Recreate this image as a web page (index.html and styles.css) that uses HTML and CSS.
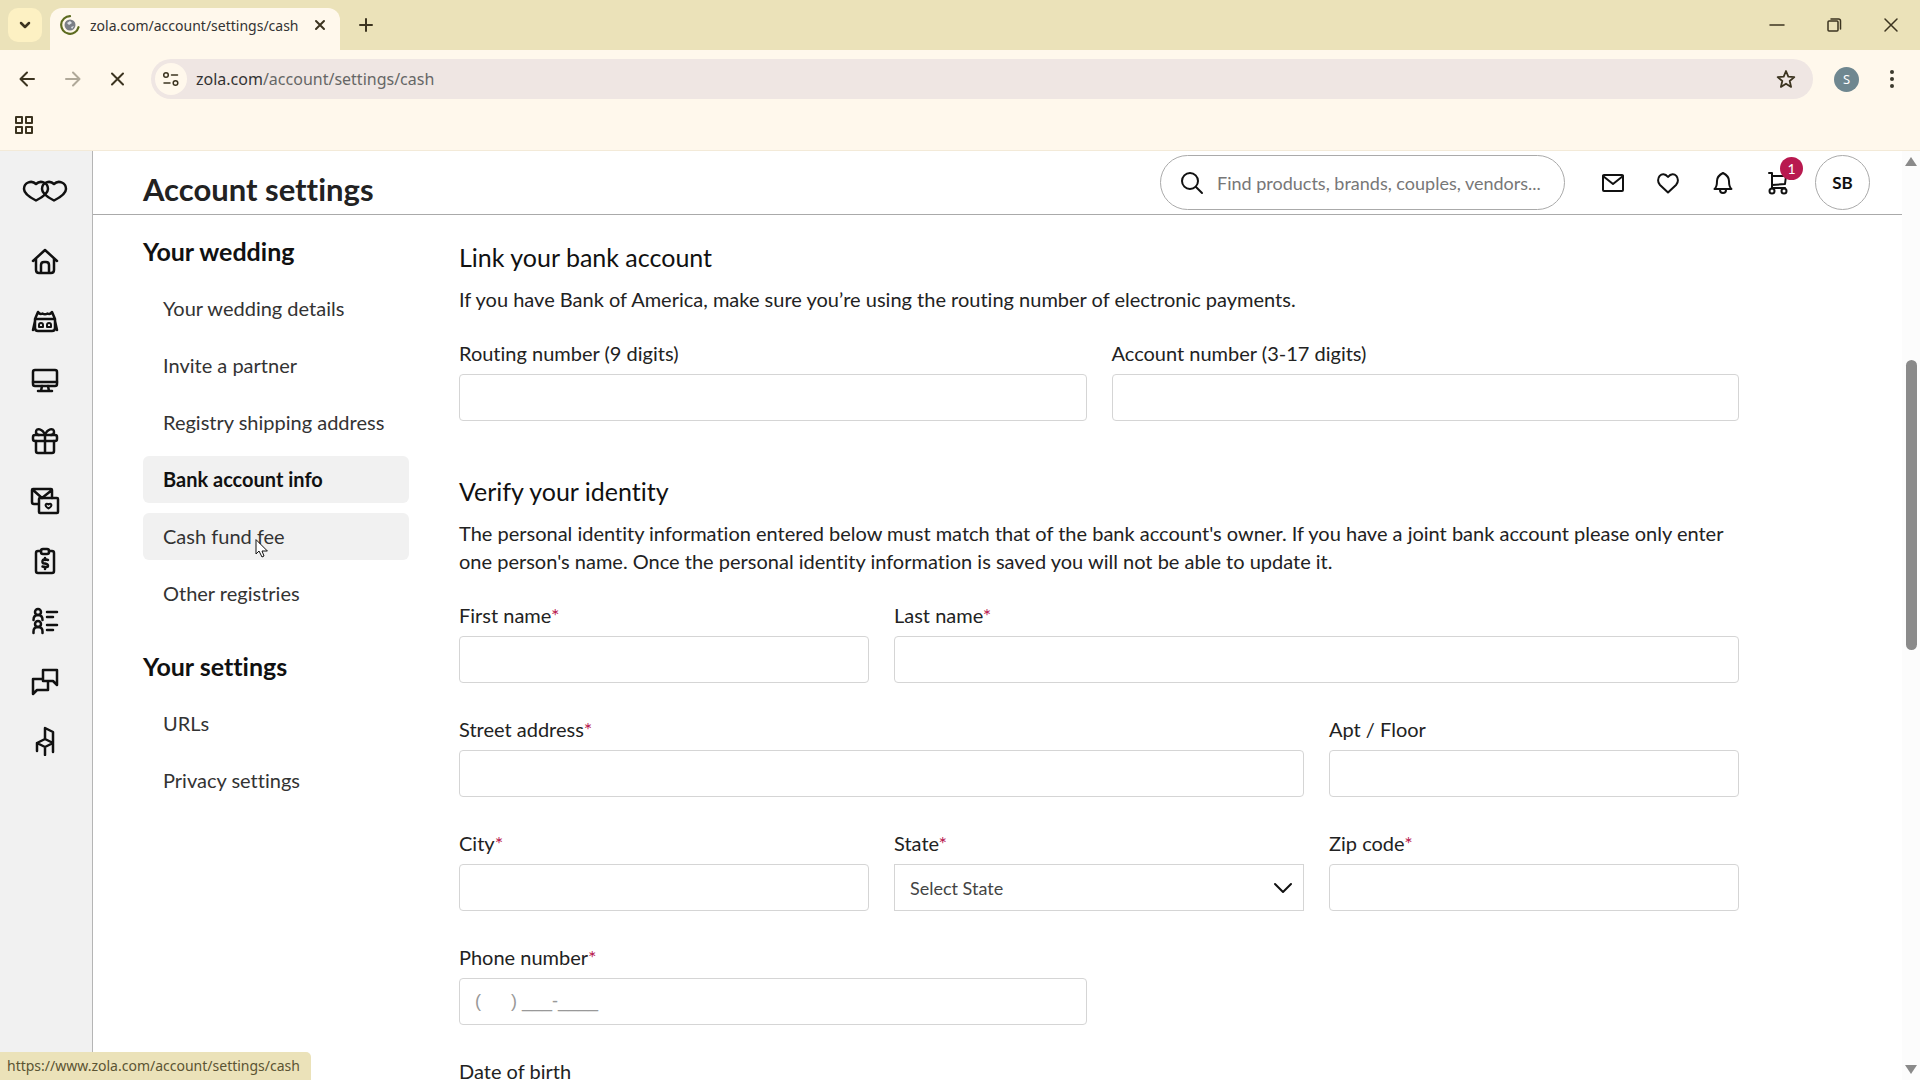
FILE: index.html
```
<!DOCTYPE html>
<html lang="en">
<head>
    <meta charset="utf-8">
    <title>Account settings</title>
    <link rel="stylesheet" href="styles.css">
</head>
<body>
    <div class="tab-strip">
        <button class="tab-search" aria-label="Search tabs">
            <svg width="24" height="24" viewBox="0 0 24 24"><path d="M8 10l4 4 4-4" stroke-width="2.5"/></svg>
        </button>
        <div class="tab">
            <svg class="favicon" width="20" height="20" viewBox="0 0 20 20">
                <circle cx="10" cy="10" r="5.5" fill="#7b7f86" stroke="none"/>
                <path d="M7 8l3-2 2 2-3 2zM11 12l3-1-2 3z" fill="#dfe3e8" stroke="none"/>
                <path d="M10 1.200a8.800 8.800 0 1 0 8.500 11" stroke="#5d6b1f" stroke-width="2.200"/>
            </svg>
            <span class="tab-title">zola.com/account/settings/cash</span>
            <button class="plain" aria-label="Close tab">
                <svg width="20" height="20" viewBox="0 0 20 20"><path d="M6 6l8 8M14 6l-8 8" stroke-width="2"/></svg>
            </button>
        </div>
        <button class="plain new-tab" aria-label="New tab">
            <svg width="24" height="24" viewBox="0 0 24 24"><path d="M12 6v12M6 12h12" stroke-width="2"/></svg>
        </button>
        <div class="window-buttons">
            <button class="plain" aria-label="Minimize"><svg width="20" height="20" viewBox="0 0 20 20"><path d="M3 10h14"/></svg></button>
            <button class="plain" aria-label="Restore"><svg width="20" height="20" viewBox="0 0 20 20"><rect x="4" y="6" width="10" height="10" rx="1"/><path d="M7 4h7.500a2 2 0 0 1 2 2v8"/></svg></button>
            <button class="plain" aria-label="Close"><svg width="20" height="20" viewBox="0 0 20 20"><path d="M4 4l12 12M16 4L4 16"/></svg></button>
        </div>
    </div>

    <div class="toolbar">
        <button class="plain" aria-label="Back"><svg width="24" height="24" viewBox="0 0 24 24"><path d="M18 12H5M11 5.500L4.500 12l6.500 6.500" stroke-width="2"/></svg></button>
        <button class="plain" aria-label="Forward"><svg class="faded" width="24" height="24" viewBox="0 0 24 24"><path d="M5 12h13M12 5.500l6.500 6.500-6.500 6.500" stroke-width="2"/></svg></button>
        <button class="plain" aria-label="Stop"><svg width="24" height="24" viewBox="0 0 24 24"><path d="M6 6.500l11 11M17 6.500l-11 11" stroke-width="2"/></svg></button>
        <div class="address">
            <span class="site-info"><svg width="20" height="20" viewBox="0 0 20 20"><circle cx="5" cy="6" r="2.300"/><path d="M10.500 6h6M3 14h6" /><circle cx="14.500" cy="14" r="2.300"/></svg></span>
            <span class="url">zola.com<span class="url-path">/account/settings/cash</span></span>
            <button class="plain" aria-label="Bookmark"><svg width="24" height="24" viewBox="0 0 24 24"><path d="M12 4l2.300 5.600 6 .5-4.600 3.900 1.400 5.900L12 16.700l-5.100 3.200 1.400-5.900-4.600-3.900 6-.5z" stroke-width="1.800"/></svg></button>
        </div>
        <span class="profile">S</span>
        <button class="plain" aria-label="Menu"><svg width="24" height="24" viewBox="0 0 24 24"><g fill="#3c3a2e" stroke="none"><circle cx="12" cy="5" r="2"/><circle cx="12" cy="12" r="2"/><circle cx="12" cy="19" r="2"/></g></svg></button>
    </div>

    <div class="bookmarks">
        <button class="plain" aria-label="Tab groups"><svg width="20" height="20" viewBox="0 0 20 20"><path d="M2 2h6v6H2zM12 2h6v6h-6zM2 12h6v6H2zM12 12h6v6h-6z" stroke-width="2"/></svg></button>
    </div>

    <div class="page">
        <nav class="rail" aria-label="Main">
            <a class="logo" href="#" aria-label="Zola">
                <svg width="46" height="24" viewBox="0 0 46 24"><path d="M14 21.500C9 19 2 15 2 10c0-7 8-9 12-5C18 1 26 3 26 10c0 5-7 9-12 11.500z"/><path d="M32 21.500C27 19 20 15 20 10c0-7 8-9 12-5C36 1 44 3 44 10c0 5-7 9-12 11.500z"/></svg>
            </a>
            <a href="#" aria-label="Home"><svg width="30" height="30" viewBox="0 0 30 30"><path d="M3 15L15 4l12 11M6 13v11q0 3 3 3h12q3 0 3-3V13M11 27v-8q0-3 3-3h2q3 0 3 3v8"/></svg></a>
            <a href="#" aria-label="Venues"><svg width="30" height="30" viewBox="0 0 30 30"><path d="M8 6q2 3 4.500 1.500Q15 9 17.500 7.500 20 9 22 6l3 7v9q0 3-3 3H8q-3 0-3-3v-9zM5 13h20M5 15l-2 9M25 15l2 9"/><path d="M9 21v-2q0-2 2-2t2 2v2zM17 21v-2q0-2 2-2t2 2v2z" stroke-width="2"/></svg></a>
            <a href="#" aria-label="Website"><svg width="30" height="30" viewBox="0 0 30 30"><rect x="3" y="4" width="24" height="16" rx="2"/><path d="M3 16h24M12 20l-1 5M18 20l1 5M8 25h14"/></svg></a>
            <a href="#" aria-label="Registry"><svg width="30" height="30" viewBox="0 0 30 30"><rect x="3" y="9" width="24" height="6" rx="2"/><path d="M6 15v10q0 2 2 2h14q2 0 2-2V15M15 9v18M15 9C13 3 6 1 6 6q0 3 3 3M15 9c2-6 9-8 9-3q0 3-3 3"/></svg></a>
            <a href="#" aria-label="Invitations"><svg width="30" height="30" viewBox="0 0 30 30"><path d="M8 18H4q-2 0-2-2V4q0-1 1-1h18q1 0 1 1v8M3 4l9 8 10-8"/><rect x="9" y="12" width="19" height="15" rx="1"/><path d="M18.500 22.500c-5-3-2.500-6 0-4 2.500-2 5 1 0 4z" stroke-width="2"/></svg></a>
            <a href="#" aria-label="Budget"><svg width="30" height="30" viewBox="0 0 30 30"><path d="M11 5H8Q6 5 6 7v18q0 2 2 2h14q2 0 2-2V7q0-2-2-2h-3"/><rect x="11" y="3" width="8" height="5" rx="2"/><path d="M18 14q-5-2-5.500 1t2.500 2.500Q18 18 18 20t-5.500.5M15 12v2M15 21v2"/></svg></a>
            <a href="#" aria-label="Guest list"><svg width="30" height="30" viewBox="0 0 30 30"><circle cx="8" cy="6" r="3"/><path d="M3.500 14q0-5 4.500-5t4.500 5"/><circle cx="8" cy="18" r="3"/><path d="M3.500 27v-1.500q0-4.500 4.500-4.500t4.500 4.500V27M17 6h10M17 11h6M17 19h10M17 24h6"/></svg></a>
            <a href="#" aria-label="Messages"><svg width="30" height="30" viewBox="0 0 30 30"><path d="M13 14V4h14v15l-4-4H13zM13 13H3v15l4-4h11v-8"/></svg></a>
            <a href="#" aria-label="Seating"><svg width="30" height="30" viewBox="0 0 30 30"><path d="M15 13V2l8 4v12M15 13l8 4-8 4-8-4zM7 17v8M15 21v8M23 17v9"/></svg></a>
        </nav>

        <div class="content">
            <header class="site-header">
                <h1>Account settings</h1>
                <label class="search">
                    <svg width="26" height="26" viewBox="0 0 26 26"><circle cx="11" cy="11" r="8"/><path d="M17 17l6 6"/></svg>
                    <input type="text" placeholder="Find products, brands, couples, vendors..." aria-label="Search">
                </label>
                <div class="header-icons">
                    <a href="#" aria-label="Inbox"><svg width="26" height="26" viewBox="0 0 26 26"><rect x="3" y="5" width="20" height="16" rx="1"/><path d="M3 6l10 8 10-8"/></svg></a>
                    <a href="#" aria-label="Favorites"><svg width="26" height="26" viewBox="0 0 26 26"><path d="M13 22.500L5 15C-.5 9 7-.5 13 7c6-7.500 13.500 2 8 8z"/></svg></a>
                    <a href="#" aria-label="Notifications"><svg width="26" height="26" viewBox="0 0 26 26"><path d="M4.500 19Q7 17 7 11q0-5 6-8 6 3 6 8 0 6 2.500 8zM10 20q0 3 3 3t3-3"/></svg></a>
                    <a class="cart" href="#" aria-label="Cart"><svg width="26" height="26" viewBox="0 0 26 26"><path d="M4 3h3v15h13M7 6h14l-1 8-13 1"/><circle cx="7" cy="21" r="2.500"/><circle cx="19" cy="21" r="2.500"/></svg><span class="badge">1</span></a>
                </div>
                <button class="avatar">SB</button>
            </header>

            <main class="main">
                <nav class="settings-nav" aria-label="Settings">
                    <h2>Your wedding</h2>
                    <ul>
                        <li><a href="#">Your wedding details</a></li>
                        <li><a href="#">Invite a partner</a></li>
                        <li><a href="#">Registry shipping address</a></li>
                        <li><a class="active" href="#">Bank account info</a></li>
                        <li><a class="hovered" href="#">Cash fund fee</a></li>
                        <li><a href="#">Other registries</a></li>
                    </ul>
                    <h2>Your settings</h2>
                    <ul>
                        <li><a href="#">URLs</a></li>
                        <li><a href="#">Privacy settings</a></li>
                    </ul>
                </nav>

                <form class="bank-form">
                    <h3>Link your bank account</h3>
                    <p>If you have Bank of America, make sure you’re using the routing number of electronic payments.</p>
                    <div class="row">
                        <div class="field half"><label for="routing">Routing number (9 digits)</label><input id="routing" type="text"></div>
                        <div class="field half"><label for="account">Account number (3-17 digits)</label><input id="account" type="text"></div>
                    </div>

                    <h3 class="verify">Verify your identity</h3>
                    <p>The personal identity information entered below must match that of the bank account's owner. If you have a joint bank account please only enter one person's name. Once the personal identity information is saved you will not be able to update it.</p>
                    <div class="row">
                        <div class="field third"><label for="first">First name<span class="req">*</span></label><input id="first" type="text"></div>
                        <div class="field two-thirds"><label for="last">Last name<span class="req">*</span></label><input id="last" type="text"></div>
                        <div class="field two-thirds"><label for="street">Street address<span class="req">*</span></label><input id="street" type="text"></div>
                        <div class="field third"><label for="apt">Apt / Floor</label><input id="apt" type="text"></div>
                        <div class="field third"><label for="city">City<span class="req">*</span></label><input id="city" type="text"></div>
                        <div class="field third">
                            <label for="state">State<span class="req">*</span></label>
                            <div class="select-box">
                                <select id="state"><option>Select State</option></select>
                                <svg width="20" height="20" viewBox="0 0 20 20"><path d="M2 6l8 8 8-8"/></svg>
                            </div>
                        </div>
                        <div class="field third"><label for="zip">Zip code<span class="req">*</span></label><input id="zip" type="text"></div>
                        <div class="field half"><label for="phone">Phone number<span class="req">*</span></label><input id="phone" class="phone" type="tel" placeholder="(&nbsp;&nbsp;&nbsp;&nbsp;&nbsp;&nbsp;) ___-____"></div>
                        <div class="field half"></div>
                        <div class="field half"><label for="dob">Date of birth</label><input id="dob" type="text"></div>
                    </div>
                </form>
            </main>
        </div>

        <div class="scrollbar">
            <span class="arrow-up"></span>
            <span class="thumb"></span>
            <span class="arrow-down"></span>
        </div>
    </div>

    <div class="status">https://www.zola.com/account/settings/cash</div>
    <svg class="cursor" width="14" height="20" viewBox="0 0 14 20"><path d="M1 1v14l3-3 3 6 2-1-2-5h5z" fill="#fff" stroke-width="1"/></svg>
</body>
</html>
```
FILE: styles.css
```
* {
    box-sizing: border-box;
}
body {
    margin: 0;
    height: 100vh;
    overflow: hidden;
    display: flex;
    flex-direction: column;
    font-family: Lato, "Liberation Sans", sans-serif;
    font-variant-ligatures: none;
    color: #222;
    background-color: #fff;
}
svg {
    display: block;
    fill: none;
    stroke: #111;
    stroke-width: 2;
    stroke-linecap: round;
    stroke-linejoin: round;
}
a {
    color: inherit;
    text-decoration: none;
}
button, input, select {
    font-family: inherit;
}
.plain {
    padding: 0;
    border: none;
    background: none;
}

/* browser window */
.tab-strip {
    flex: none;
    display: flex;
    height: 50px;
    padding-left: 8px;
    background-color: #ebe2b9;
    font-family: "Noto Sans", sans-serif;
}
.tab-strip svg, .toolbar svg, .bookmarks svg {
    stroke: #3c3420;
    stroke-width: 1.5;
}
.tab-search {
    width: 34px;
    height: 34px;
    margin-top: 8px;
    padding: 5px;
    border: none;
    border-radius: 10px;
    background-color: #fdf1c3;
}
.tab {
    display: flex;
    align-items: center;
    width: 290px;
    margin: 8px 0 0 8px;
    padding: 0 10px 8px;
    border-radius: 12px 12px 0 0;
    background-color: #fff8ec;
}
.tab-title {
    flex: 1;
    margin-left: 10px;
    font-size: 14px;
    color: #333;
}
.new-tab {
    margin-left: 14px;
}
.window-buttons {
    display: flex;
    gap: 37px;
    margin-left: auto;
    padding-right: 19px;
}
.toolbar {
    flex: none;
    display: flex;
    align-items: center;
    gap: 21px;
    height: 58px;
    padding: 0 16px;
    background-color: #fff8ec;
    font-family: "Noto Sans", sans-serif;
}
.faded {
    opacity: 0.4;
}
.address {
    flex: 1;
    display: flex;
    align-items: center;
    height: 40px;
    padding: 0 15px 0 4px;
    border-radius: 20px;
    background-color: #efe6e3;
}
.site-info {
    padding: 6px;
    border-radius: 50%;
    background-color: #fff8ec;
}
.url {
    flex: 1;
    margin-left: 9px;
    font-size: 16px;
    color: #333;
}
.url-path {
    color: #666;
}
.profile {
    width: 25px;
    height: 25px;
    border-radius: 50%;
    background-color: #6f8790;
    color: #fff;
    font-size: 13px;
    line-height: 25px;
    text-align: center;
}
.bookmarks {
    flex: none;
    height: 43px;
    padding: 7px 14px;
    border-bottom: 1px solid #f3ead8;
    background-color: #fff8ec;
}

/* site */
.page {
    flex: 1;
    min-height: 0;
    display: flex;
}
.rail {
    flex: none;
    display: flex;
    flex-direction: column;
    align-items: center;
    gap: 30px;
    width: 93px;
    padding: 28px 2px 0 0;
    border-right: 1px solid #b5b5b5;
    background-color: #f1f1f1;
}
.rail svg {
    stroke-width: 2.5;
}
.logo {
    margin-bottom: 13px;
}
.content {
    flex: 1;
    display: flex;
    flex-direction: column;
    min-width: 0;
}
.site-header {
    flex: none;
    display: flex;
    align-items: center;
    height: 64px;
    padding: 0 32px 0 50px;
    border-bottom: 1px solid #aaa;
}
h1 {
    margin: 12px auto 0 0;
    font-size: 31px;
    line-height: 36px;
    font-weight: 700;
}
.search {
    display: flex;
    align-items: center;
    gap: 12px;
    width: 405px;
    height: 55px;
    padding: 0 18px;
    border: 1px solid #aaa;
    border-radius: 28px;
}
.search input {
    flex: 1;
    min-width: 0;
    padding: 0;
    border: none;
    outline: none;
    background: none;
    font-size: 18px;
}
.search input::placeholder {
    color: #777;
}
.header-icons {
    display: flex;
    gap: 29px;
    margin: 0 24px 0 35px;
}
.cart {
    position: relative;
}
.badge {
    position: absolute;
    top: -13px;
    right: -12px;
    width: 23px;
    height: 23px;
    border-radius: 50%;
    background-color: #b8194f;
    color: #fff;
    font-size: 14px;
    line-height: 23px;
    text-align: center;
}
.avatar {
    width: 55px;
    height: 55px;
    padding: 0;
    border: 1px solid #aaa;
    border-radius: 50%;
    background-color: #fff;
    color: #111;
    font-size: 17px;
    font-weight: 700;
}
.main {
    flex: 1;
    min-height: 0;
    display: flex;
    gap: 50px;
    padding: 0 163px 0 50px;
}

/* settings menu */
.settings-nav {
    flex: none;
    width: 266px;
    padding-top: 19px;
}
.settings-nav h2 {
    margin: 0 0 17px;
    font-size: 25px;
    line-height: 34px;
    font-weight: 700;
    color: #111;
}
.settings-nav ul {
    display: grid;
    gap: 10px;
    margin: 0 0 32px;
    padding: 0;
    list-style: none;
}
.settings-nav a {
    display: block;
    padding: 0 20px;
    border-radius: 6px;
    font-size: 20px;
    line-height: 47px;
    color: #333;
}
.settings-nav .active, .settings-nav .hovered {
    background-color: #f1f1f1;
}
.settings-nav .active {
    font-weight: 700;
    color: #111;
}

/* form */
.bank-form {
    flex: 1;
    padding-top: 25px;
}
h3 {
    margin: 0;
    font-size: 25px;
    line-height: 34px;
    font-weight: 400;
    color: #111;
}
.verify {
    margin-top: 53px;
}
.bank-form p {
    margin: 11px 0 26px;
    font-size: 20px;
    line-height: 28px;
}
.row {
    display: grid;
    grid-template-columns: repeat(6, 1fr);
    gap: 32px 25px;
}
.half {
    grid-column: span 3;
}
.third {
    grid-column: span 2;
}
.two-thirds {
    grid-column: span 4;
}
.field label {
    display: block;
    margin-bottom: 7px;
    font-size: 20px;
    line-height: 28px;
}
.req {
    color: #b8194f;
}
.field input, .field select {
    display: block;
    width: 100%;
    height: 47px;
    padding: 0 15px;
    border: 1px solid #d5d5d5;
    border-radius: 4px;
    background-color: #fff;
    color: #444;
    font-size: 18px;
}
.field .phone {
    font-family: "Liberation Sans", sans-serif;
}
.field input::placeholder {
    color: #999;
}
.field select {
    appearance: none;
    border-radius: 0;
}
.select-box {
    position: relative;
}
.select-box svg {
    position: absolute;
    top: 14px;
    right: 11px;
    pointer-events: none;
}

/* page scrollbar */
.scrollbar {
    flex: none;
    display: flex;
    flex-direction: column;
    align-items: center;
    width: 18px;
    padding: 6px 0;
    background-color: #fcfcfc;
}
.arrow-up, .arrow-down {
    border: 6px solid transparent;
}
.arrow-up {
    border-top: none;
    border-bottom: 9px solid #8a8a8a;
}
.arrow-down {
    margin-top: auto;
    border-bottom: none;
    border-top: 9px solid #8a8a8a;
}
.thumb {
    width: 11px;
    height: 290px;
    margin-top: 194px;
    border-radius: 6px;
    background-color: #8a8a8a;
}

/* link preview and pointer */
.status {
    position: absolute;
    left: 0;
    bottom: 0;
    padding: 3px 11px 4px 7px;
    border-radius: 0 5px 0 0;
    background-color: #ebe2b9;
    color: #5b5433;
    font-family: "Noto Sans", sans-serif;
    font-size: 14px;
    line-height: 21px;
}
.cursor {
    position: absolute;
    left: 255px;
    top: 539px;
}
```
